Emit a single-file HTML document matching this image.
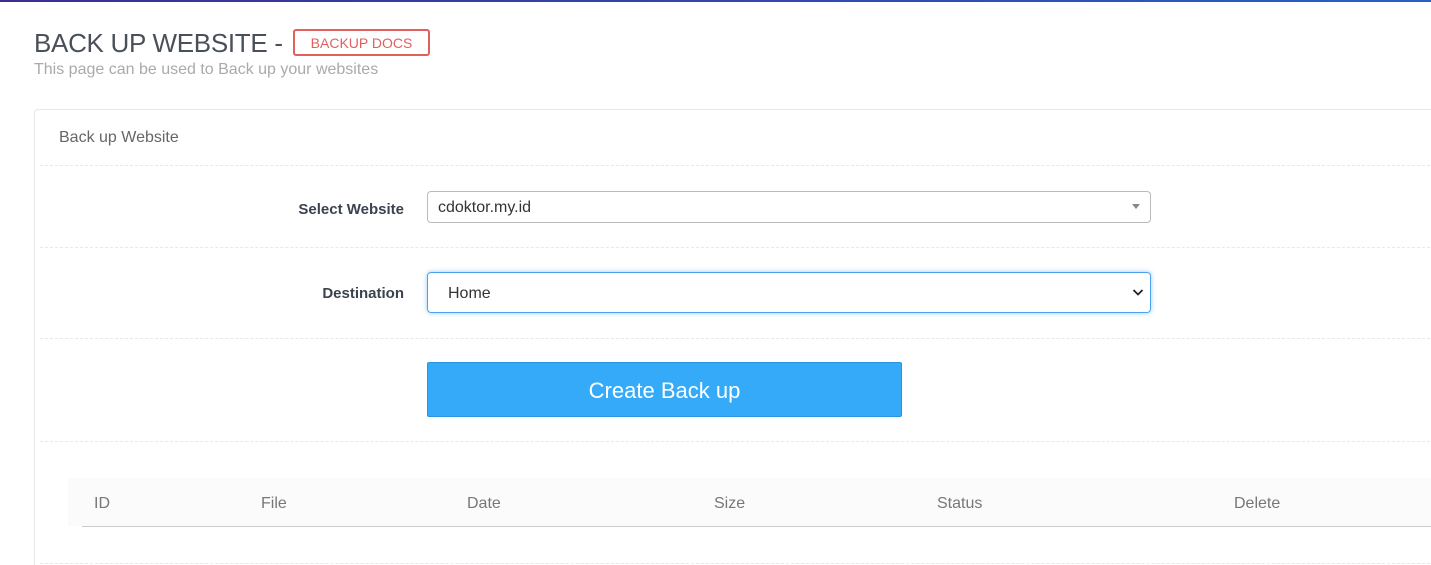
<!DOCTYPE html>
<html style="overflow:hidden;height:565px"><head><meta charset="utf-8"><style>
*{box-sizing:border-box;margin:0;padding:0}
body{width:1431px;height:565px;overflow:hidden;background:#fff;font-family:"Liberation Sans",sans-serif;position:relative}
.top{position:absolute;left:0;top:0;width:1431px;height:2px;background:linear-gradient(90deg,#3a2f8f,#2a5ec9)}
.a{position:absolute}
h1{position:absolute;left:34px;top:28px;font-weight:normal;font-size:26px;color:#4a505a;letter-spacing:-0.3px;white-space:nowrap}
.badge{position:absolute;left:293px;top:29px;width:137px;height:27px;border:2px solid #e0605e;border-radius:3px;color:#e0605e;font-size:14px;text-align:center;line-height:24px}
.sub{left:34px;top:61px;font-size:16px;color:#aaa}
.panel{left:34px;top:109px;width:1420px;height:470px;border:1px solid #e6e6e6;border-radius:4px}
.ptitle{left:59px;top:129px;font-size:16px;color:#666}
.dash{position:absolute;left:40px;width:1400px;border-top:1px dashed #e8e8e8}
.lbl{font-size:15px;font-weight:bold;color:#3b4350;text-align:right;width:200px}
.sel{left:427px;top:191px;width:724px;height:32px;border:1px solid #bbb;border-radius:4px;font-size:16px;color:#333;padding:7px 10px}
.sel2{left:427px;top:272px;width:724px;height:41px;border:1px solid #4aa3f0;border-radius:4px;box-shadow:0 0 5px rgba(80,160,240,.6);font-size:16px;color:#333;padding:12px 20px}
.btn{left:427px;top:362px;width:475px;height:55px;background:#35aaf8;border:1px solid #2796e0;border-radius:2px;color:#fff;font-size:22px;text-align:center;line-height:55px}
.th{top:478px;left:68px;width:1380px;height:48px;background:#fbfbfb}
.tl{top:526px;left:82px;width:1360px;height:1px;background:#ccc}
.tc{top:495px;font-size:16px;color:#777}
</style></head><body>
<div class="top"></div>
<h1>BACK UP WEBSITE -</h1>
<div class="badge">BACKUP DOCS</div>
<div class="a sub">This page can be used to Back up your websites</div>
<div class="a panel"></div>
<div class="a ptitle">Back up Website</div>
<div class="dash" style="top:165px"></div>
<div class="a lbl" style="left:204px;top:201px">Select Website</div>
<div class="a sel">cdoktor.my.id<span style="position:absolute;right:10px;top:12px;width:0;height:0;border-left:4px solid transparent;border-right:4px solid transparent;border-top:5px solid #888"></span></div>
<div class="dash" style="top:247px"></div>
<div class="a lbl" style="left:204px;top:285px">Destination</div>
<div class="a sel2">Home<svg style="position:absolute;right:6px;top:15px" width="12" height="9" viewBox="0 0 12 9"><path d="M1.5 2 L6 6.5 L10.5 2" fill="none" stroke="#222" stroke-width="1.8"/></svg></div>
<div class="dash" style="top:338px"></div>
<div class="a btn">Create Back up</div>
<div class="dash" style="top:441px"></div>
<div class="a th"></div>
<div class="a tl"></div>
<div class="a tc" style="left:94px">ID</div>
<div class="a tc" style="left:261px">File</div>
<div class="a tc" style="left:467px">Date</div>
<div class="a tc" style="left:714px">Size</div>
<div class="a tc" style="left:937px">Status</div>
<div class="a tc" style="left:1234px">Delete</div>
<div class="dash" style="top:563px"></div>
</body></html>
